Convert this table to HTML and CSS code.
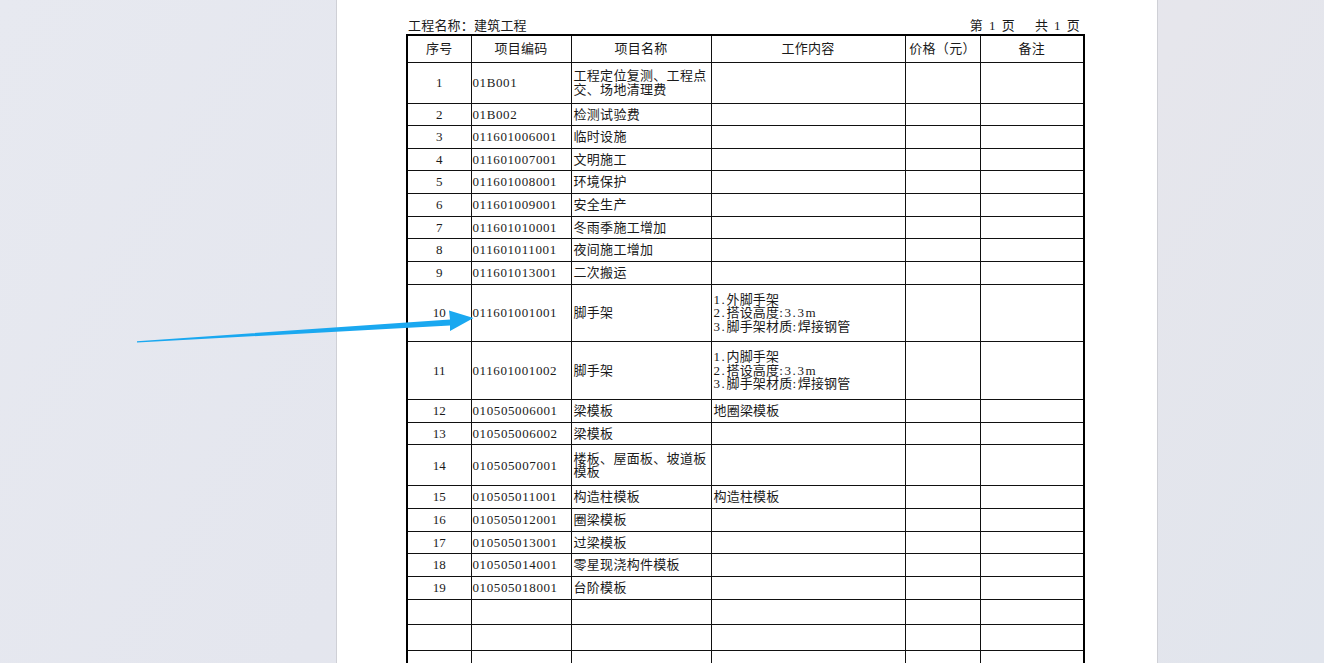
FILE: index.html
```html
<!DOCTYPE html>
<html lang="zh-CN">
<head>
<meta charset="utf-8">
<title>工程量清单</title>
<link rel="stylesheet" href="styles.css">
</head>
<body>
<div class="sheet">
  <div class="doc">
    <div class="doc-head">
      <span class="proj">工程名称：建筑工程</span>
      <span class="pages"><span class="pg">第<span class="n">1</span>页</span><span class="pg">共<span class="n">1</span>页</span></span>
    </div>
    <table class="grid">
      <colgroup>
        <col class="c1"><col class="c2"><col class="c3"><col class="c4"><col class="c5"><col class="c6">
      </colgroup>
      <thead>
        <tr class="hd"><th>序号</th><th>项目编码</th><th>项目名称</th><th>工作内容</th><th>价格（元）</th><th>备注</th></tr>
      </thead>
      <tbody>
        <tr class="r2"><td class="no">1</td><td class="code">01B001</td><td class="name">工程定位复测、工程点交、场地清理费</td><td></td><td></td><td></td></tr>
        <tr class="r1"><td class="no">2</td><td class="code">01B002</td><td class="name">检测试验费</td><td></td><td></td><td></td></tr>
        <tr class="r1"><td class="no">3</td><td class="code">011601006001</td><td class="name">临时设施</td><td></td><td></td><td></td></tr>
        <tr class="r1"><td class="no">4</td><td class="code">011601007001</td><td class="name">文明施工</td><td></td><td></td><td></td></tr>
        <tr class="r1"><td class="no">5</td><td class="code">011601008001</td><td class="name">环境保护</td><td></td><td></td><td></td></tr>
        <tr class="r1"><td class="no">6</td><td class="code">011601009001</td><td class="name">安全生产</td><td></td><td></td><td></td></tr>
        <tr class="r1"><td class="no">7</td><td class="code">011601010001</td><td class="name">冬雨季施工增加</td><td></td><td></td><td></td></tr>
        <tr class="r1"><td class="no">8</td><td class="code">011601011001</td><td class="name">夜间施工增加</td><td></td><td></td><td></td></tr>
        <tr class="r1"><td class="no">9</td><td class="code">011601013001</td><td class="name">二次搬运</td><td></td><td></td><td></td></tr>
        <tr class="r3"><td class="no">10</td><td class="code">011601001001</td><td class="name">脚手架</td><td class="work"><span class="asc">1.</span>外脚手架<br><span class="asc">2.</span>搭设高度<span class="asc">:3.3m</span><br><span class="asc">3.</span>脚手架材质<span class="asc">:</span>焊接钢管</td><td></td><td></td></tr>
        <tr class="r3b"><td class="no">11</td><td class="code">011601001002</td><td class="name">脚手架</td><td class="work"><span class="asc">1.</span>内脚手架<br><span class="asc">2.</span>搭设高度<span class="asc">:3.3m</span><br><span class="asc">3.</span>脚手架材质<span class="asc">:</span>焊接钢管</td><td></td><td></td></tr>
        <tr class="r1"><td class="no">12</td><td class="code">010505006001</td><td class="name">梁模板</td><td class="work">地圈梁模板</td><td></td><td></td></tr>
        <tr class="r1"><td class="no">13</td><td class="code">010505006002</td><td class="name">梁模板</td><td></td><td></td><td></td></tr>
        <tr class="r2"><td class="no">14</td><td class="code">010505007001</td><td class="name">楼板、屋面板、坡道板模板</td><td></td><td></td><td></td></tr>
        <tr class="r1"><td class="no">15</td><td class="code">010505011001</td><td class="name">构造柱模板</td><td class="work">构造柱模板</td><td></td><td></td></tr>
        <tr class="r1"><td class="no">16</td><td class="code">010505012001</td><td class="name">圈梁模板</td><td></td><td></td><td></td></tr>
        <tr class="r1"><td class="no">17</td><td class="code">010505013001</td><td class="name">过梁模板</td><td></td><td></td><td></td></tr>
        <tr class="r1"><td class="no">18</td><td class="code">010505014001</td><td class="name">零星现浇构件模板</td><td></td><td></td><td></td></tr>
        <tr class="r1"><td class="no">19</td><td class="code">010505018001</td><td class="name">台阶模板</td><td></td><td></td><td></td></tr>
        <tr class="re"><td></td><td></td><td></td><td></td><td></td><td></td></tr>
        <tr class="re2"><td></td><td></td><td></td><td></td><td></td><td></td></tr>
        <tr class="re2"><td></td><td></td><td></td><td></td><td></td><td></td></tr>
      </tbody>
    </table>
  </div>
</div>
<svg class="arrow" width="1324" height="663" viewBox="0 0 1324 663" aria-hidden="true">
  <polygon points="137,341.2 450,319.5 449,310.5 473.5,318 450,331 450,325.5 137,342.6" fill="#1aa8f0"/>
</svg>
</body>
</html>
```

FILE: styles.css
```css
html, body {
  margin: 0;
  padding: 0;
}

body {
  width: 1324px;
  height: 663px;
  overflow: hidden;
  position: relative;
  background: linear-gradient(120deg, #e7e9f0 0%, #e4e6ee 40%, #e6e6ec 70%, #e1e5ed 100%);
  display: flex;
  font-family: "Liberation Serif", "Noto Sans CJK SC", serif;
  color: #1a1a1a;
}

.sheet {
  margin-left: 336px;
  width: 820px;
  height: 663px;
  background: #fff;
  border-left: 1px solid #cfd0d6;
  border-right: 1px solid #cfd0d6;
  overflow: hidden;
}

.doc {
  padding-left: 69px;
  padding-top: 16px;
  width: 677px;
}

.doc-head {
  display: flex;
  justify-content: space-between;
  align-items: flex-end;
  height: 18px;
  padding: 0 3px 0 2px;
  font-size: 13px;
  line-height: 16px;
  letter-spacing: 0.2px;
}

.pages {
  display: flex;
  gap: 20px;
}

.pg .n {
  margin: 0 6px;
}

.grid {
  border-collapse: collapse;
  table-layout: fixed;
  width: 677px;
  border: 2px solid #000;
  font-size: 13px;
}

.c1 { width: 64px; }
.c2 { width: 100px; }
.c3 { width: 140px; }
.c4 { width: 194px; }
.c5 { width: 75px; }
.c6 { width: 104px; }

.grid th,
.grid td {
  border: 1px solid #111;
  padding: 0 2px;
  vertical-align: middle;
  line-height: 13.5px;
  overflow: hidden;
}

.grid th {
  font-weight: 400;
  text-align: center;
  letter-spacing: 0.3px;
}

.hd { height: 27px; }
.r1 { height: 22.65px; }
.r2 { height: 41px; }
.r3 { height: 57.5px; }
.r3b { height: 58px; }
.re { height: 25px; }
.re2 { height: 26px; }

.no {
  text-align: center;
}

.code {
  text-align: left;
  letter-spacing: 0.6px;
  padding-left: 1px !important;
}

.name {
  letter-spacing: 0.3px;
}

.work {
  letter-spacing: 0.2px;
}

.work .asc {
  letter-spacing: 1.6px;
}

.arrow {
  position: absolute;
  top: 0;
  left: 0;
  pointer-events: none;
}
```
